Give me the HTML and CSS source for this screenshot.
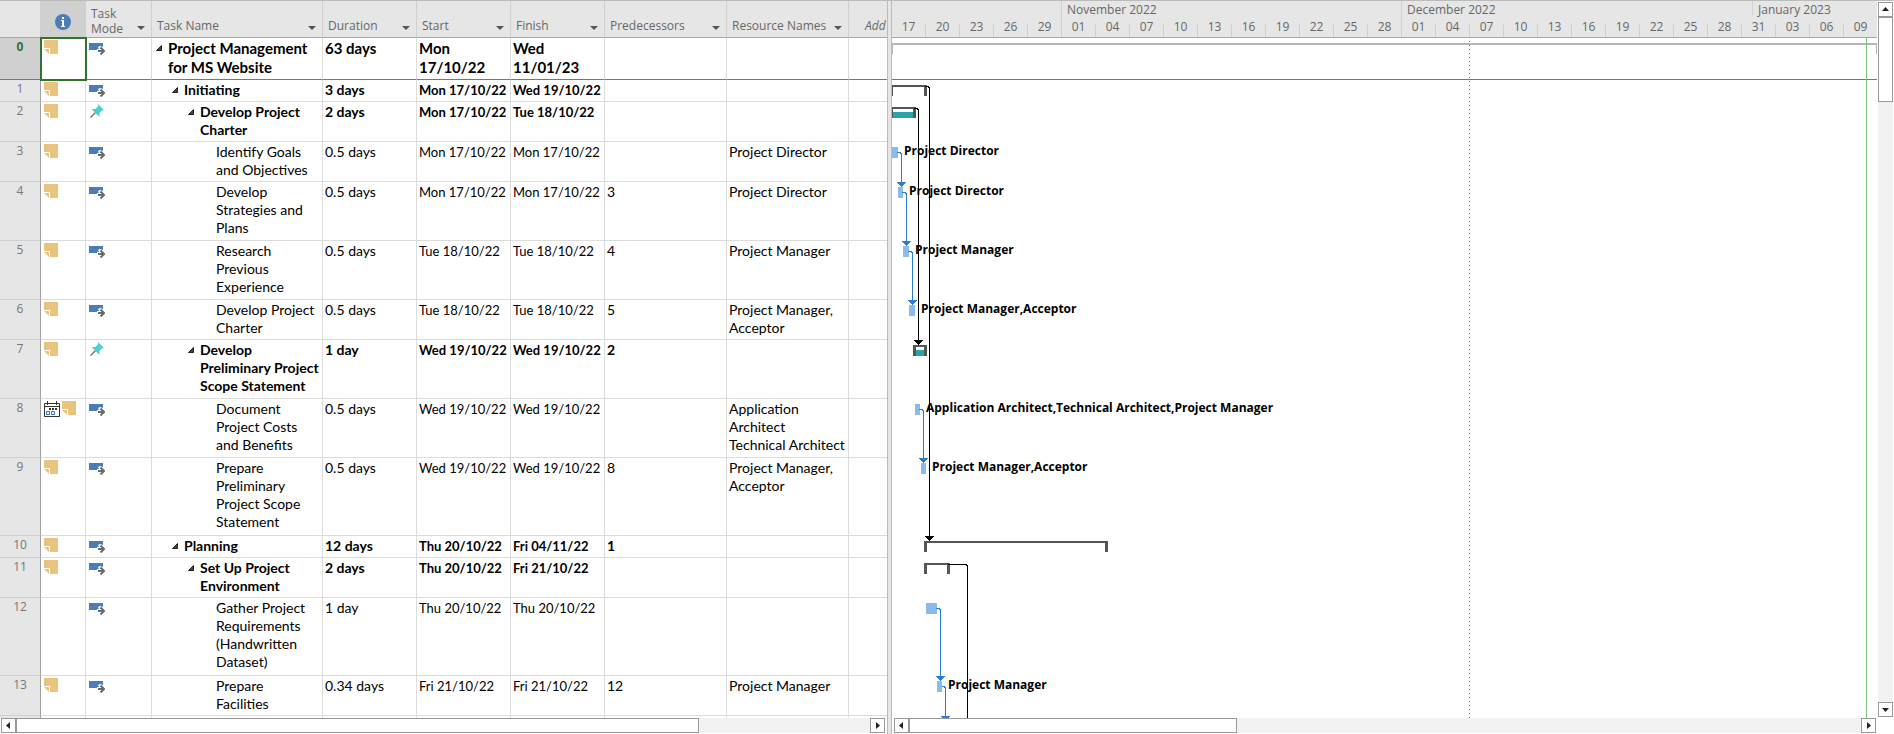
FILE: index.html
```html
<!DOCTYPE html>
<html lang="en">
<head>
<meta charset="utf-8">
<title>Project Management for MS Website</title>
<link rel="stylesheet" href="styles.css">
</head>
<body>
<svg class="defs" aria-hidden="true">
  <symbol id="note" viewBox="0 0 14 14"><path fill="#e8c47f" d="M0 0h14v14H6V8H0z"/><path fill="#e8c47f" d="M0 9h5v5z"/></symbol>
  <symbol id="auto" viewBox="0 0 16 12"><path fill="#4a7eb5" d="M0 0h14v4l-3-1-2 1 1 2H8v1H0z"/><path fill="none" stroke="#6b6b6b" stroke-width="2" d="M9 8h5.500M11.500 4.500L15 8l-3.500 3.500"/></symbol>
  <symbol id="pin" viewBox="0 0 14 14"><path stroke="#777" stroke-width="1.500" d="M5.500 8.500L.5 13.500"/><path fill="#48d1d1" d="M8 0l6 6-2 .5L9.500 9v4L1.500 5h4L8 2.500z"/></symbol>
  <symbol id="tri" viewBox="0 0 6 6"><path fill="#444" stroke="#222" d="M5.500 .5v5H.5z"/></symbol>
  <symbol id="cal" viewBox="0 0 16 16"><path fill="#fff" stroke="#333" d="M.5 2.500h15v13H.5zM.5 5.500h15M3.500 0v4M12.500 0v4"/><path fill="#333" d="M5 7h2v2H5zM8 7h2v2H8zM11 7h2v2h-2z"/><path fill="none" stroke="#1f78c1" d="M2.500 10.500h3v3h-3zM7.500 10.500h3v3h-3z"/></symbol>
</svg>
<main class="app">
  <section class="sheet">
    <div class="sheet-view">
      <table class="tasks">
        <colgroup><col class="c-id"><col class="c-ind"><col class="c-mode"><col class="c-name"><col class="c-date"><col class="c-date"><col class="c-date"><col class="c-res"><col class="c-res"><col></colgroup>
        <thead>
          <tr>
            <th></th>
            <th class="selected"><svg class="info" viewBox="0 0 16 16" role="img" aria-label="Indicators"><circle cx="8" cy="8" r="8" fill="#4a7eb5"/><path fill="#fff" d="M7 3h2v2H7zM6 6h3v6h1v1H6v-1h1V7H6z"/></svg></th>
            <th><button class="head two-line">Task<br>Mode</button></th>
            <th><button class="head">Task Name</button></th>
            <th><button class="head">Duration</button></th>
            <th><button class="head">Start</button></th>
            <th><button class="head">Finish</button></th>
            <th><button class="head">Predecessors</button></th>
            <th><button class="head">Resource Names</button></th>
            <th class="add">Add</th>
          </tr>
        </thead>
        <tbody id="rows"></tbody>
      </table>
    </div>
    <div class="hscroll"><button aria-label="Scroll left"><svg viewBox="0 0 13 13"><path d="M8 3v7L4 6.500z"/></svg></button><div class="track"><div class="thumb sheet-thumb"></div></div><button aria-label="Scroll right"><svg viewBox="0 0 13 13"><path d="M5 3v7l4-3.500z"/></svg></button></div>
  </section>
  <div class="splitter"></div>
  <section class="gantt">
    <div class="scale">
      <div class="months"><span class="m-oct"></span><span class="m-nov">November 2022</span><span class="m-dec">December 2022</span><span class="m-jan">January 2023</span></div>
      <div class="days" id="days"></div>
    </div>
    <svg class="canvas" id="canvas"></svg>
    <div class="hscroll"><button aria-label="Scroll left"><svg viewBox="0 0 13 13"><path d="M8 3v7L4 6.500z"/></svg></button><div class="track"><div class="thumb gantt-thumb"></div></div><button aria-label="Scroll right"><svg viewBox="0 0 13 13"><path d="M5 3v7l4-3.500z"/></svg></button></div>
  </section>
  <div class="vscroll"><button aria-label="Scroll up"><svg viewBox="0 0 13 13"><path d="M3 8h7L6.500 4z"/></svg></button><div class="track"><div class="thumb"></div></div><button aria-label="Scroll down"><svg viewBox="0 0 13 13"><path d="M3 5h7L6.500 9z"/></svg></button></div>
</main>
<script src="script.js"></script>
</body>
</html>
```
FILE: styles.css
```css
* { box-sizing: border-box; }
body { margin: 0; background: #fff; color: #000; font: 14px/18px Lato, "Open Sans", sans-serif; overflow: hidden; }
button { font: inherit; color: inherit; padding: 0; border: 0; background: none; }
.defs { display: none; }
.app { display: grid; grid-template-columns: 887px 5px minmax(0, 1fr) 17px; height: 100vh; border-top: 1px solid #bbb; }
.sheet, .gantt { display: flex; flex-direction: column; min-width: 0; min-height: 0; }
.sheet-view { flex: 1; min-height: 0; overflow: hidden; }
.splitter { background: #e6e6e6; border: solid #bbb; border-width: 0 1px; }

.tasks { width: 100%; table-layout: fixed; border-collapse: separate; border-spacing: 0; }
.c-id { width: 41px; }
.c-ind { width: 45px; }
.c-mode { width: 66px; }
.c-name { width: 171px; }
.c-date { width: 94px; }
.c-res { width: 122px; }
.tasks th, .tasks td { padding: 0; text-align: left; vertical-align: top; border: solid #dcdcdc; border-width: 0 1px 1px 0; }
.tasks th:last-child, .tasks td:last-child { border-right: 0; }
.tasks thead th { height: 37px; background: #e6e6e6; border-color: #d0d0d0; border-bottom-color: #a6a6a6; vertical-align: bottom; color: #666; font: 12px/15px "Open Sans", "Noto Sans", sans-serif; }
.tasks thead th.selected { background: #d0d0d0; text-align: center; vertical-align: middle; }
.info { display: inline-block; width: 16px; height: 16px; margin-top: 8px; }
.head { display: flex; align-items: flex-end; justify-content: space-between; width: 100%; padding: 0 6px 4px 5px; text-align: left; }
.head.two-line { padding-bottom: 1px; }
.head::after { content: ""; margin-bottom: 3px; border: solid transparent; border-width: 4px 4px 0; border-top-color: #555; }
.head.two-line::after { margin-bottom: 6px; }
.tasks thead .add { padding: 0 0 4px 16px; font-style: italic; white-space: nowrap; overflow: hidden; }
.tasks tbody th { background: #e6e6e6; border-right-color: #a0a0a0; border-bottom-color: #cfcfcf; text-align: center; font: 12px/18px "Open Sans", sans-serif; color: #777; }
.tasks td { padding: 1px 0 0 2px; overflow: hidden; }
.lines-1 { height: 22px; }
.lines-2 { height: 40px; }
.lines-3 { height: 59px; }
.lines-4 { height: 78px; }
.root { height: 42px; font-size: 15px; line-height: 19px; }
.tasks .root th, .tasks .root td { border-bottom-color: #777; }
.tasks .root th { background: #d0d0d0; color: #2f7430; font-weight: 700; }
.summary td { font-weight: 700; }
.tasks .date { font-size: 13px; white-space: nowrap; }
.tasks .root .date { font-size: 15px; }
.tasks .ind { padding: 2px 0 0 3px; }
.root .ind { outline: 2px solid #2f7430; outline-offset: -1px; }
.tasks .mode { padding: 5px 0 0 3px; }
.tasks .mode.pinned { padding: 2px 0 0 4px; }
.icon { display: block; width: 14px; height: 14px; }
.icon-auto { width: 16px; height: 12px; }
.icon-cal { width: 16px; height: 16px; }
.ind-set { display: flex; gap: 2px; }
.name { display: flex; gap: 6px; white-space: nowrap; }
.name .tri { flex: none; width: 6px; height: 6px; margin-top: 6px; }
.level-0 { padding-left: 2px; }
.level-1 { padding-left: 18px; }
.level-2 { padding-left: 34px; }
.level-3 { padding-left: 62px; }

.scale { height: 37px; flex: none; background: #e6e6e6; border-bottom: 1px solid #a6a6a6; color: #666; font: 12px/15px "Open Sans", "Noto Sans", sans-serif; overflow: hidden; }
.months { display: flex; height: 23px; white-space: nowrap; }
.months span { padding: 1px 0 0 5px; border-left: 1px solid #d0d0d0; }
.months .m-oct { width: 169px; border: 0; }
.m-nov { width: 340px; }
.m-dec { width: 351px; }
.m-jan { height: 14px; }
.days { display: flex; height: 13px; line-height: 5px; }
.days span { flex: none; width: 34px; border-right: 1px solid #d0d0d0; text-align: center; }
.canvas { display: block; flex: 1; width: 100%; min-height: 0; font: 700 12px "Open Sans", "Noto Sans", sans-serif; shape-rendering: crispEdges; }

.hscroll, .vscroll { flex: none; display: flex; }
.hscroll { height: 16px; margin: 0 2px 0 1px; padding-bottom: 1px; }
.gantt .hscroll { margin: 0 1px 0 2px; }
.vscroll { flex-direction: column; padding: 1px 1px 17px; }
.hscroll button, .vscroll button { flex: none; width: 15px; height: 15px; border: 1px solid #999; background: #fff; }
.hscroll button svg, .vscroll button svg { display: block; width: 13px; height: 13px; fill: #222; }
.track { flex: 1; background: #f2f2f2; min-width: 0; }
.thumb { background: #fff; border: 1px solid #999; }
.hscroll .thumb { height: 15px; }
.vscroll .thumb { height: 85px; }
.sheet-thumb { width: 80%; }
.gantt-thumb { width: 328px; }
```
FILE: script.js
```js
// id, indicators, mode, level, name lines, duration, start, finish, predecessors, resources, row lines
const tasks = [
  [0, "n", "a", 0, "Project Management|for MS Website", "63 days", "Mon|17/10/22", "Wed|11/01/23", "", "", 2],
  [1, "n", "a", 1, "Initiating", "3 days", "Mon 17/10/22", "Wed 19/10/22", "", "", 1],
  [2, "n", "p", 2, "Develop Project|Charter", "2 days", "Mon 17/10/22", "Tue 18/10/22", "", "", 2],
  [3, "n", "a", 3, "Identify Goals|and Objectives", "0.5 days", "Mon 17/10/22", "Mon 17/10/22", "", "Project Director", 2],
  [4, "n", "a", 3, "Develop|Strategies and|Plans", "0.5 days", "Mon 17/10/22", "Mon 17/10/22", "3", "Project Director", 3],
  [5, "n", "a", 3, "Research|Previous|Experience", "0.5 days", "Tue 18/10/22", "Tue 18/10/22", "4", "Project Manager", 3],
  [6, "n", "a", 3, "Develop Project|Charter", "0.5 days", "Tue 18/10/22", "Tue 18/10/22", "5", "Project Manager,|Acceptor", 2],
  [7, "n", "p", 2, "Develop|Preliminary Project|Scope Statement", "1 day", "Wed 19/10/22", "Wed 19/10/22", "2", "", 3],
  [8, "cn", "a", 3, "Document|Project Costs|and Benefits", "0.5 days", "Wed 19/10/22", "Wed 19/10/22", "", "Application|Architect|Technical Architect", 3],
  [9, "n", "a", 3, "Prepare|Preliminary|Project Scope|Statement", "0.5 days", "Wed 19/10/22", "Wed 19/10/22", "8", "Project Manager,|Acceptor", 4],
  [10, "n", "a", 1, "Planning", "12 days", "Thu 20/10/22", "Fri 04/11/22", "1", "", 1],
  [11, "n", "a", 2, "Set Up Project|Environment", "2 days", "Thu 20/10/22", "Fri 21/10/22", "", "", 2],
  [12, "", "a", 3, "Gather Project|Requirements|(Handwritten|Dataset)", "1 day", "Thu 20/10/22", "Thu 20/10/22", "", "", 4],
  [13, "n", "a", 3, "Prepare|Facilities", "0.34 days", "Fri 21/10/22", "Fri 21/10/22", "12", "Project Manager", 2],
  ["", "", "", 3, "", "", "", "", "", "", 1]
];
const icon = (id, cls) => `<svg class="icon ${cls}"><use href="#${id}"/></svg>`;
const lines = s => s.split("|").join("<br>");
const cell = (v, cls) => `<td class="${cls}">${lines(v)}</td>`;
document.getElementById("rows").innerHTML = tasks.map(([id, ind, mode, level, name, dur, start, finish, pred, res, n]) => {
  const summary = level < 3;
  return `<tr class="lines-${n}${summary ? " summary" : ""}${level === 0 ? " root" : ""}"><th>${id}</th>` +
    `<td class="ind"><div class="ind-set">${ind.includes("c") ? icon("cal", "icon-cal") : ""}${ind.includes("n") ? icon("note", "") : ""}</div></td>` +
    `<td class="mode${mode === "p" ? " pinned" : ""}">${mode === "a" ? icon("auto", "icon-auto") : mode === "p" ? icon("pin", "") : ""}</td>` +
    `<td><div class="name level-${level}">${summary ? '<svg class="tri"><use href="#tri"/></svg>' : ""}<span>${lines(name)}</span></div></td>` +
    cell(dur, "duration") + cell(start, "date") + cell(finish, "date") + cell(pred, "pred") + cell(res, "res") + "<td></td></tr>";
}).join("");

// One scale label every three days from 17 October
document.getElementById("days").innerHTML = Array.from({ length: 29 }, (_, i) =>
  `<span>${String(new Date(Date.UTC(2022, 9, 17 + i * 3)).getUTCDate()).padStart(2, "0")}</span>`).join("");

// Chart drawing, origin at the top left of the chart body
const rect = (x, y, w, h, c) => `<rect x="${x}" y="${y}" width="${w}" height="${h}" fill="${c}"/>`;
const bracket = (x, y, w) => rect(x, y, w, 2, "#555") + rect(x, y, 3, 11, "#555") + rect(x + w - 3, y, 3, 11, "#555");
const link = (x1, y1, x2, y2, c) =>
  `<path fill="none" stroke="${c}" d="M${x1} ${y1 + .5}H${x2 - 1}L${x2 + .5} ${y1 + 2}V${y2}"/><path fill="${c}" d="M${x2 - 4} ${y2}h9l-4 4.500h-1z"/>`;
const blue = "#2b7cd3", bar = "#8bbbed", teal = "#2aa3ad";
let s = "";
s += rect(0, 5, "100%", 2, "#b5b5b5") + rect(0, 5, 1, 11, "#b5b5b5") + rect(984, 5, 1, 11, "#b5b5b5") + rect(0, 41, "100%", 1, "#777");
s += `<path stroke="#777" stroke-dasharray="1 3" d="M577.500 3V2000"/>` + rect(974, 0, 1, "100%", "#7fc67f");
s += bracket(-2, 47, 37) + rect(0, 74, 21, 6, teal) + bracket(-2, 69, 26) + rect(24, 312, 8, 6, teal) + bracket(21, 307, 14);
s += bracket(32, 503, 184) + bracket(32, 525, 26);
[[0, 109, 6], [6, 149, 5], [11, 208, 6], [17, 267, 6], [23, 366, 5], [29, 425, 5], [34, 565, 11], [45, 643, 5]].forEach(([x, y, w]) => s += rect(x, y, w, 11, bar));
[[5, 114, 9, 144], [10, 154, 14, 203], [16, 213, 20, 262], [27, 371, 31, 420], [44, 570, 48, 638], [50, 648, 53, 678]].forEach(l => s += link(...l, blue));
s += link(33, 48, 37, 498, "#000") + link(22, 70, 26, 302, "#000") + link(56, 526, 75, 700, "#000");
[[12, 117, "Project Director"], [17, 157, "Project Director"], [23, 216, "Project Manager"], [29, 275, "Project Manager,Acceptor"],
 [34, 374, "Application Architect,Technical Architect,Project Manager"], [40, 433, "Project Manager,Acceptor"], [56, 651, "Project Manager"]]
  .forEach(([x, y, t]) => s += `<text x="${x}" y="${y}">${t}</text>`);
document.getElementById("canvas").innerHTML = s;
```
